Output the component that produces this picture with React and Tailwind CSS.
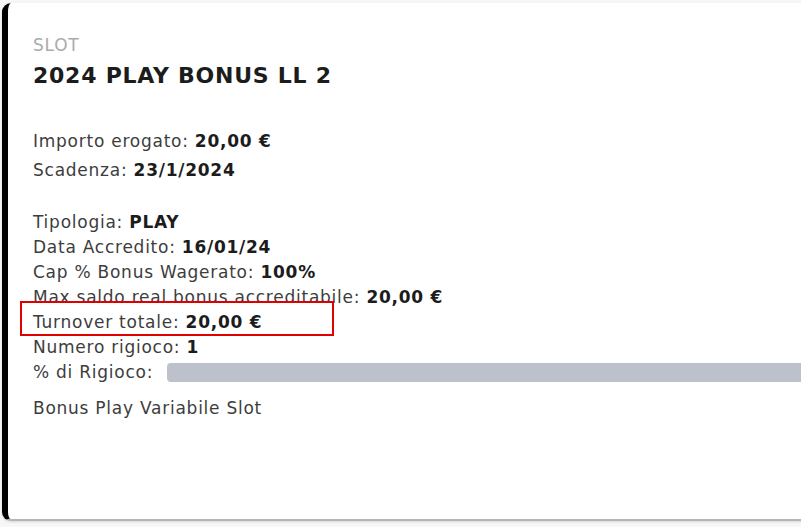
const rows = [
  { label: "Tipologia:", value: "PLAY" },
  { label: "Data Accredito:", value: "16/01/24" },
  { label: "Cap % Bonus Wagerato:", value: "100%" },
  { label: "Max saldo real bonus accreditabile:", value: "20,00 €" },
];

const Row = ({ label, value }) => (
  <div className="h-[25px] leading-[25px]">
    {label} <span className="font-bold text-[#1c1c1c]">{value}</span>
  </div>
);

export default function App() {
  return (
    <div className="w-[801px] h-[527px] bg-[#f7f7f7] pt-[3px] pl-[2px] overflow-hidden font-['DejaVu_Sans',sans-serif]">
      <div className="w-[820px] h-[518px] bg-white rounded-l-[9px] border-l-[6px] border-black border-b-2 border-b-[#b5b5b5] shadow-sm pl-[25px] pt-[32px] text-[17px] tracking-[0.75px] text-[#3d3d3d]">
        <div className="text-[#ababab] leading-[20px]">SLOT</div>
        <h1 className="mt-[8px] text-[22px] font-bold text-[#1c1c1c] leading-[26px]">
          2024 PLAY BONUS LL 2
        </h1>

        <div className="mt-[40px]">
          <div className="h-[29px] leading-[25px]">
            Importo erogato: <span className="font-bold text-[#1c1c1c]">20,00 €</span>
          </div>
          <Row label="Scadenza:" value="23/1/2024" />
        </div>

        <div className="mt-[27px]">
          {rows.map((r) => (
            <Row key={r.label} {...r} />
          ))}
          <div className="relative">
            <Row label="Turnover totale:" value="20,00 €" />
            <div className="absolute left-[-13px] top-[-9px] w-[314px] h-[35px] border-2 border-[#e00000]" />
          </div>
          <Row label="Numero rigioco:" value="1" />
          <div className="flex items-center h-[25px]">
            <span>% di Rigioco:</span>
            <div className="ml-[14px] flex-1 h-[19px] rounded-[4px] bg-[#bdc1cc]" />
          </div>
          <div className="mt-[11px] leading-[25px]">Bonus Play Variabile Slot</div>
        </div>
      </div>
    </div>
  );
}
